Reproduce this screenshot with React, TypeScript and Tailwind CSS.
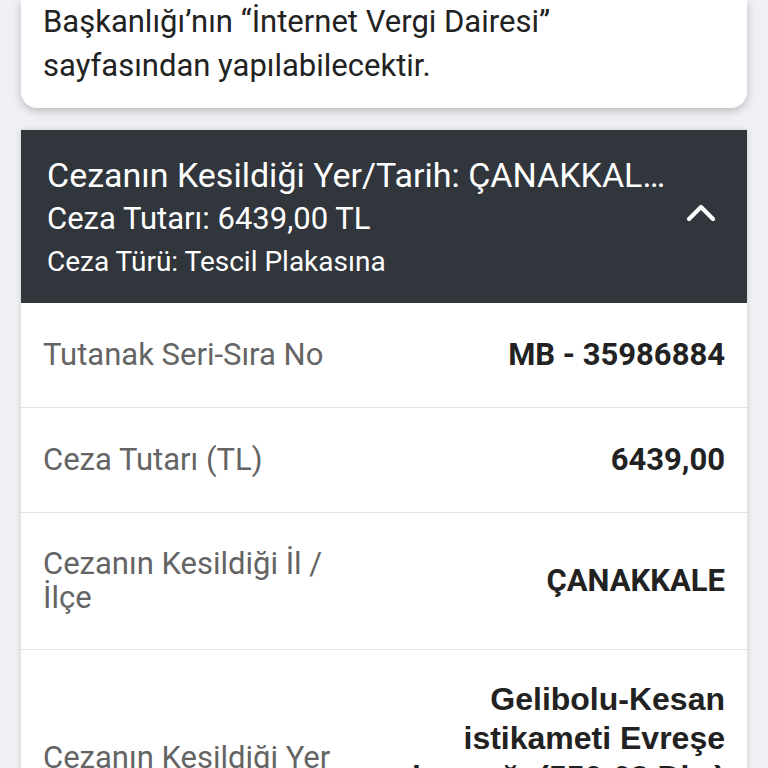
import { ChevronUp } from "lucide-react"

const rows = [
  { label: "Tutanak Seri-Sıra No", value: "MB - 35986884", pad: "py-[35px]" },
  { label: "Ceza Tutarı (TL)", value: "6439,00", pad: "py-[35px]" },
  { label: "Cezanın Kesildiği İl / İlçe", value: "ÇANAKKALE", pad: "py-[34px]" },
  {
    label: "Cezanın Kesildiği Yer",
    value: "Gelibolu-Kesan istikameti Evreşe kavşağı (550-03 Dkz) mevkii",
    pad: "pt-[30px] pb-[35px]",
    wide: true,
  },
]

function InfoCard() {
  return (
    <div className="mx-[21px] bg-white rounded-b-2xl shadow-[0_3px_8px_rgba(0,0,0,0.22)] pl-[22px] pr-[60px] pb-5">
      <p className="text-[31px] leading-[44px] text-[#222]">
        Başkanlığı’nın “İnternet Vergi Dairesi” sayfasından yapılabilecektir.
      </p>
    </div>
  )
}

function PenaltyCard() {
  return (
    <div className="mx-[21px] mt-[22px] bg-white shadow-[0_0_6px_rgba(0,0,0,0.15)]">
      <div className="flex items-center bg-[#31353c] text-white pl-[26px] pr-[22px] pt-6 pb-5">
        <div className="flex-1 min-w-0">
          <p className="text-[34px] leading-[43px] truncate">
            Cezanın Kesildiği Yer/Tarih: ÇANAKKALE / 12.03.2024
          </p>
          <p className="text-[31px] leading-[43px]">Ceza Tutarı: 6439,00 TL</p>
          <p className="text-[28px] leading-[43px]">Ceza Türü: Tescil Plakasına</p>
        </div>
        <ChevronUp className="w-[48px] h-[48px] ml-[8px] -mt-[12px] shrink-0" strokeWidth={2.1} />
      </div>
      {rows.map((r) => (
        <div
          key={r.label}
          className={`grid grid-cols-2 items-center px-[22px] border-b border-[#e2e2e2] ${r.pad}`}
        >
          <p className="text-[31px] leading-[34px] text-[#646464] pr-4">{r.label}</p>
          <p
            className={
              r.wide
                ? "text-right font-bold text-[32px] leading-[39px] text-[#222] font-['Liberation_Sans',sans-serif]"
                : "text-right font-bold text-[31px] leading-[34px] text-[#222]"
            }
          >
            {r.value}
          </p>
        </div>
      ))}
    </div>
  )
}

export default function App() {
  return (
    <div className="h-[768px] overflow-hidden bg-[#eef0f3] font-['Roboto',sans-serif]">
      <InfoCard />
      <PenaltyCard />
    </div>
  )
}
